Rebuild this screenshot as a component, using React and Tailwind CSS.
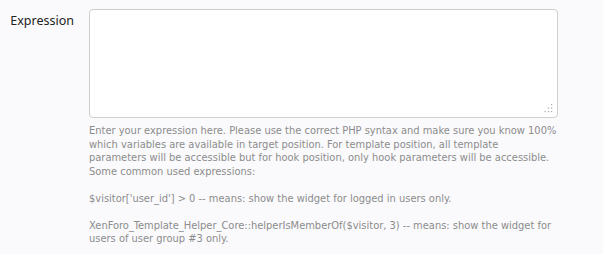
export default function App() {
  return (
    <div className="w-[603px] h-[254px] bg-[#fafafc] overflow-hidden">
      <div className="flex pt-[9px]">
        <div className="w-[74px] shrink-0 text-right pt-[3px] text-[12.5px] leading-[17px] text-[#222] font-['Noto_Sans',sans-serif]">
          Expression
        </div>
        <div className="ml-[15px] w-[469px]">
          <div className="relative h-[109px] w-[469px] rounded-[4px] border border-[#cfcfcf] bg-white">
            <svg className="absolute right-[4px] bottom-[4px]" width="9" height="9" viewBox="0 0 9 9">
              <rect x="7" y="0" width="1.2" height="1.2" fill="#a8a8a8" />
              <rect x="4" y="3.5" width="1.2" height="1.2" fill="#a8a8a8" />
              <rect x="7" y="3.5" width="1.2" height="1.2" fill="#a8a8a8" />
              <rect x="0.5" y="7" width="1.2" height="1.2" fill="#a8a8a8" />
              <rect x="4" y="7" width="1.2" height="1.2" fill="#a8a8a8" />
              <rect x="7" y="7" width="1.2" height="1.2" fill="#a8a8a8" />
            </svg>
          </div>
          <div className="mt-[6px] text-[11px] leading-[13.5px] text-[#8c8c8c] font-['DejaVu_Sans_Condensed','DejaVu_Sans',sans-serif]">
            <p>
              Enter your expression here. Please use the correct PHP syntax and make sure you know 100% which variables are available in target position. For template position, all template parameters will be accessible but for hook position, only hook parameters will be accessible. Some common used expressions:
            </p>
            <p className="mt-[13.5px]">$visitor['user_id'] &gt; 0 -- means: show the widget for logged in users only.</p>
            <p className="mt-[13.5px]">XenForo_Template_Helper_Core::helperIsMemberOf($visitor, 3) -- means: show the widget for users of user group #3 only.</p>
          </div>
        </div>
      </div>
    </div>
  );
}
